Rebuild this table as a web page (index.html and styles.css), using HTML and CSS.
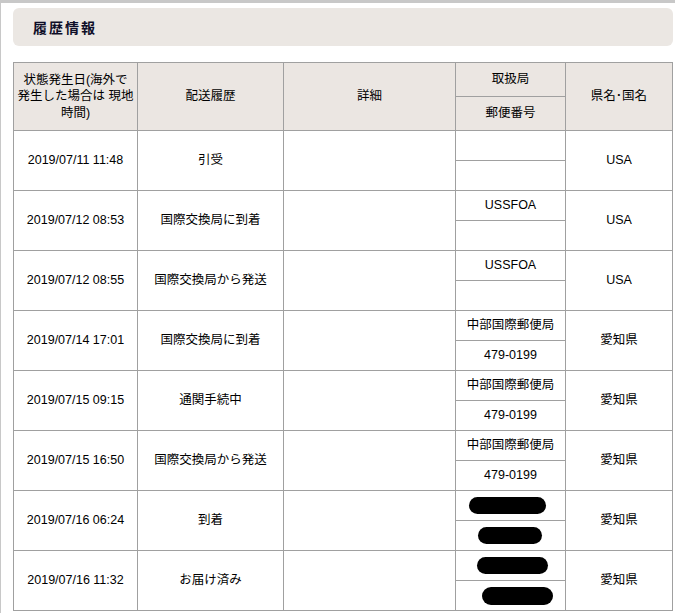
FILE: index.html
```html
<!DOCTYPE html>
<html lang="ja">
<head>
<meta charset="utf-8">
<title>履歴情報</title>
<link rel="stylesheet" href="styles.css">
</head>
<body>
<div class="page">
  <h2 class="heading">履歴情報</h2>
  <table class="history">
    <colgroup>
      <col class="c1"><col class="c2"><col class="c3"><col class="c4"><col class="c5">
    </colgroup>
    <thead>
      <tr class="hr">
        <th rowspan="2">状態発生日(海外で<br>発生した場合は 現地<br>時間)</th>
        <th rowspan="2">配送履歴</th>
        <th rowspan="2">詳細</th>
        <th>取扱局</th>
        <th rowspan="2">県名･国名</th>
      </tr>
      <tr class="hr"><th>郵便番号</th></tr>
    </thead>
    <tbody>
      <tr><td rowspan="2">2019/07/11 11:48</td><td rowspan="2">引受</td><td rowspan="2"></td><td></td><td rowspan="2">USA</td></tr>
      <tr><td></td></tr>
      <tr><td rowspan="2">2019/07/12 08:53</td><td rowspan="2">国際交換局に到着</td><td rowspan="2"></td><td>USSFOA</td><td rowspan="2">USA</td></tr>
      <tr><td></td></tr>
      <tr><td rowspan="2">2019/07/12 08:55</td><td rowspan="2">国際交換局から発送</td><td rowspan="2"></td><td>USSFOA</td><td rowspan="2">USA</td></tr>
      <tr><td></td></tr>
      <tr><td rowspan="2">2019/07/14 17:01</td><td rowspan="2">国際交換局に到着</td><td rowspan="2"></td><td>中部国際郵便局</td><td rowspan="2">愛知県</td></tr>
      <tr><td>479-0199</td></tr>
      <tr><td rowspan="2">2019/07/15 09:15</td><td rowspan="2">通関手続中</td><td rowspan="2"></td><td>中部国際郵便局</td><td rowspan="2">愛知県</td></tr>
      <tr><td>479-0199</td></tr>
      <tr><td rowspan="2">2019/07/15 16:50</td><td rowspan="2">国際交換局から発送</td><td rowspan="2"></td><td>中部国際郵便局</td><td rowspan="2">愛知県</td></tr>
      <tr><td>479-0199</td></tr>
      <tr><td rowspan="2">2019/07/16 06:24</td><td rowspan="2">到着</td><td rowspan="2"></td><td><span class="redact r1"></span></td><td rowspan="2">愛知県</td></tr>
      <tr><td><span class="redact r2"></span></td></tr>
      <tr><td rowspan="2">2019/07/16 11:32</td><td rowspan="2">お届け済み</td><td rowspan="2"></td><td><span class="redact r3"></span></td><td rowspan="2">愛知県</td></tr>
      <tr><td><span class="redact r4"></span></td></tr>
    </tbody>
  </table>
</div>
</body>
</html>
```
FILE: styles.css
```css
html, body {
  margin: 0;
  padding: 0;
  background: #ffffff;
}
body {
  border-top: 3px solid #c8c8c8;
  border-left: 1px solid #c8c8c8;
  min-height: 610px;
  font-family: "Liberation Sans", "Noto Sans CJK JP", sans-serif;
  font-size: 12.5px;
  color: #000;
}
.page {
  padding: 5px 0 0 12px;
}
.heading {
  margin: 0 0 16px 0;
  width: 660px;
  height: 38px;
  box-sizing: border-box;
  background: #ebe7e3;
  border-radius: 6px;
  padding: 0 0 0 20px;
  display: flex;
  align-items: center;
  font-size: 14px;
  font-weight: bold;
  letter-spacing: 2px;
  color: #0e0e28;
}
.history {
  border-collapse: collapse;
  table-layout: fixed;
  width: 660px;
}
.c1 { width: 124px; }
.c2 { width: 146px; }
.c3 { width: 172px; }
.c4 { width: 110px; }
.c5 { width: 107px; }
.history th,
.history td {
  border: 1px solid #a0a0a0;
  padding: 0;
  text-align: center;
  vertical-align: middle;
  font-weight: normal;
  line-height: 16.5px;
}
.history th {
  background: #ebe6e2;
}
.history tr.hr { height: 34px; }
.history tbody tr { height: 30px; }
.redact {
  display: inline-block;
  height: 17px;
  background: #000;
  border-radius: 9px;
  vertical-align: middle;
}
.r1 { width: 77px; margin-left: -7px; }
.r2 { width: 64px; margin-left: -2px; }
.r3 { width: 71px; margin-left: 3px; }
.r4 { width: 71px; margin-left: 13px; height: 18px; }
```
